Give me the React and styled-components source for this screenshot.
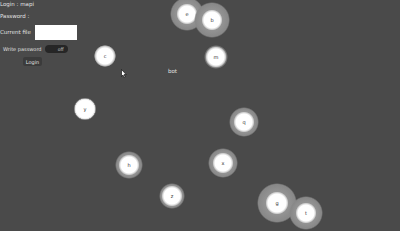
import React from "react"
import styled, { createGlobalStyle } from "styled-components"

const GlobalStyle = createGlobalStyle`
  html, body {
    margin: 0;
    padding: 0;
    background: #4a4a4a;
    font-family: "DejaVu Sans", "Liberation Sans", sans-serif;
    -webkit-font-smoothing: antialiased;
  }
`

// r = white disc radius, outer = radius of the grey halo
const NODES = [
    { id: "e", x: 187, y: 14, r: 9, outer: 17 },
    { id: "b", x: 212, y: 20, r: 9, outer: 18 },
    { id: "c", x: 105, y: 56, r: 9, outer: 11 },
    { id: "m", x: 216, y: 57, r: 9, outer: 12 },
    { id: "y", x: 85, y: 109, r: 10, outer: 10 },
    { id: "q", x: 244, y: 122, r: 9, outer: 15 },
    { id: "h", x: 129, y: 165, r: 9, outer: 14 },
    { id: "x", x: 223, y: 163, r: 9, outer: 15 },
    { id: "z", x: 172, y: 196, r: 9, outer: 13 },
    { id: "g", x: 277, y: 203, r: 10, outer: 20 },
    { id: "t", x: 306, y: 213, r: 9, outer: 17 },
]

export default function App() {
    return (
        <>
            <GlobalStyle />
            <Canvas>
                <Form>
                    <Label>Login : mapi</Label>
                    <Label>Password :</Label>
                    <Row>
                        <Label>Current file</Label>
                        <FileBox />
                    </Row>
                    <Row $indent={3}>
                        <Label $size={5}>Write password</Label>
                        <Toggle>off</Toggle>
                    </Row>
                    <Button>Login</Button>
                </Form>
                <BotLabel>bot</BotLabel>
                <Cursor width="6" height="9" viewBox="0 0 6 9">
                    <path d="M0.5 0.5 L0.5 7.5 L2 6 L3.2 8.5 L4.2 8 L3 5.6 L5.2 5.6 Z" fill="#fff" stroke="#000" strokeWidth="0.6" />
                </Cursor>
                {NODES.map(n => {
                    const outer = Math.max(n.outer, n.r + 1)
                    return (
                        <Node
                            key={n.id}
                            $size={outer * 2}
                            $r={n.r}
                            $outer={outer}
                            style={{ left: n.x - outer, top: n.y - outer }}
                        >
                            {n.id}
                        </Node>
                    )
                })}
            </Canvas>
        </>
    )
}

const Canvas = styled.div`
    position: relative;
    width: 400px;
    height: 231px;
    overflow: hidden;
    background: #4a4a4a;
`

const Form = styled.div`
    display: flex;
    flex-direction: column;
    align-items: flex-start;
    gap: 5px;
    padding-top: 1px;
    position: relative;
    z-index: 2;
`

const Label = styled.span`
    font-size: ${p => p.$size || 5.5}px;
    color: #e0e0e0;
    line-height: 7px;
`

const Row = styled.div`
    display: flex;
    align-items: center;
    gap: 3px;
    padding-left: ${p => p.$indent || 0}px;
`

const FileBox = styled.div`
    width: 42px;
    height: 15px;
    margin-left: 1px;
    background: #ffffff;
`

const Toggle = styled.div`
    width: 23px;
    height: 8px;
    border-radius: 4px;
    background: #262626;
    color: #d0d0d0;
    font-size: 4.5px;
    display: flex;
    align-items: center;
    justify-content: flex-end;
    padding-right: 4px;
    box-sizing: border-box;
`

const Button = styled.div`
    margin-left: 23px;
    margin-top: -1px;
    width: 19px;
    height: 9px;
    background: #3b3b3b;
    border-radius: 2px;
    color: #e0e0e0;
    font-size: 5px;
    display: flex;
    align-items: center;
    justify-content: center;
`

const BotLabel = styled.span`
    position: absolute;
    left: 168px;
    top: 68px;
    font-size: 5.5px;
    color: #e0e0e0;
`

const Cursor = styled.svg`
    position: absolute;
    left: 121px;
    top: 69px;
`

const Node = styled.div`
    position: absolute;
    width: ${p => p.$size}px;
    height: ${p => p.$size}px;
    border-radius: 50%;
    background: radial-gradient(
        circle closest-side,
        #ffffff 0,
        #ffffff ${p => p.$r - 1}px,
        #d0d0d0 ${p => p.$r + 0.5}px,
        #939393 ${p => Math.min(p.$r + 1.5, p.$outer - 0.5)}px,
        #888888 ${p => Math.max(p.$outer - 1.5, p.$r + 1.5)}px,
        rgba(74, 74, 74, 0) ${p => p.$outer}px
    );
    display: flex;
    align-items: center;
    justify-content: center;
    font-size: 5px;
    color: #333333;
`
